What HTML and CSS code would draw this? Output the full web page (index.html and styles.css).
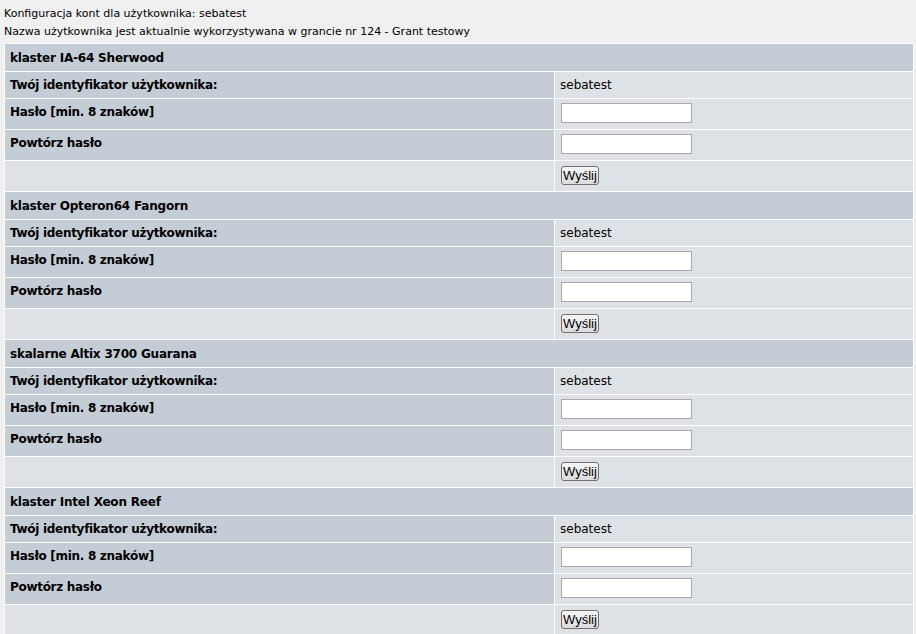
FILE: index.html
```html
<!DOCTYPE html>
<html lang="pl">
<head>
    <meta charset="UTF-8">
    <title>Konfiguracja kont</title>
    <link rel="stylesheet" href="styles.css">
</head>
<body>
    <div class="info">Konfiguracja kont dla użytkownika: sebatest</div>
    <div class="info">Nazwa użytkownika jest aktualnie wykorzystywana w grancie nr 124 - Grant testowy</div>

    <table class="accounts">
        <tr class="head"><td colspan="2">klaster IA-64 Sherwood</td></tr>
        <tr class="short"><td class="label">Twój identyfikator użytkownika:</td><td class="value">sebatest</td></tr>
        <tr><td class="label">Hasło [min. 8 znaków]</td><td class="value"><input type="password"></td></tr>
        <tr><td class="label">Powtórz hasło</td><td class="value"><input type="password"></td></tr>
        <tr><td class="empty"></td><td class="value"><button type="button">Wyślij</button></td></tr>

        <tr class="head"><td colspan="2">klaster Opteron64 Fangorn</td></tr>
        <tr class="short"><td class="label">Twój identyfikator użytkownika:</td><td class="value">sebatest</td></tr>
        <tr><td class="label">Hasło [min. 8 znaków]</td><td class="value"><input type="password"></td></tr>
        <tr><td class="label">Powtórz hasło</td><td class="value"><input type="password"></td></tr>
        <tr><td class="empty"></td><td class="value"><button type="button">Wyślij</button></td></tr>

        <tr class="head"><td colspan="2">skalarne Altix 3700 Guarana</td></tr>
        <tr class="short"><td class="label">Twój identyfikator użytkownika:</td><td class="value">sebatest</td></tr>
        <tr><td class="label">Hasło [min. 8 znaków]</td><td class="value"><input type="password"></td></tr>
        <tr><td class="label">Powtórz hasło</td><td class="value"><input type="password"></td></tr>
        <tr><td class="empty"></td><td class="value"><button type="button">Wyślij</button></td></tr>

        <tr class="head"><td colspan="2">klaster Intel Xeon Reef</td></tr>
        <tr class="short"><td class="label">Twój identyfikator użytkownika:</td><td class="value">sebatest</td></tr>
        <tr><td class="label">Hasło [min. 8 znaków]</td><td class="value"><input type="password"></td></tr>
        <tr><td class="label">Powtórz hasło</td><td class="value"><input type="password"></td></tr>
        <tr><td class="empty"></td><td class="value"><button type="button">Wyślij</button></td></tr>
    </table>
</body>
</html>
```

FILE: styles.css
```css
body {
    margin: 5px 2px 4px 4px;
    background: #f0f0f0;
    font-family: "DejaVu Sans", Verdana, sans-serif;
    font-size: 11px;
    color: #000;
}

.info {
    line-height: 18px;
}

.accounts {
    margin-top: 2px;
    width: 910px;
    border-collapse: separate;
    border-spacing: 1px;
    background: #fff;
}

.accounts td {
    height: 30px;
    padding: 0 5px;
    vertical-align: middle;
}

.accounts tr.head td {
    height: 27px;
}

.accounts tr.short td {
    height: 26px;
}

.head td {
    background: #c4cdd6;
    font-weight: bold;
    font-size: 12px;
    letter-spacing: -0.2px;
}

.label {
    width: 539px;
    background: #c4cdd6;
    font-weight: bold;
    font-size: 12px;
    letter-spacing: -0.3px;
}

.accounts tr:not(.short) .label {
    height: 26px;
    padding-bottom: 4px;
}

.accounts tr:not(.short) .value {
    height: 28px;
    padding-bottom: 2px;
}

.empty {
    background: #dee2e6;
}

.value {
    background: #dee2e6;
    font-size: 12px;
}

input {
    width: 131px;
    height: 20px;
    box-sizing: border-box;
    border: 1px solid #a9a9a9;
    background: #fff;
    margin: 0 0 0 1px;
    padding: 1px 2px;
}

button {
    font-family: "Liberation Sans", Arial, sans-serif;
    font-size: 13px;
    padding: 0 1px;
    height: 19px;
    margin: 0 0 0 1px;
    border: 1px solid #707070;
    border-radius: 3px;
    background: linear-gradient(#f6f6f6, #dcdcdc);
    color: #000;
}
```
